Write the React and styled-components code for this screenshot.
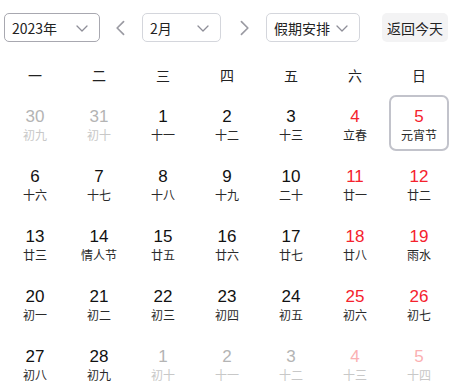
import styled, { createGlobalStyle } from "styled-components";

const GlobalStyle = createGlobalStyle`
  body {
    margin: 0;
    background: #ffffff;
    font-family: "Liberation Sans", "Noto Sans CJK SC", sans-serif;
  }
`;

const Wrapper = styled.div`
  width: 453px;
  padding: 13px 0 0 3px;
  box-sizing: border-box;
`;

const Toolbar = styled.div`
  display: flex;
  align-items: center;
  height: 29px;
  padding-left: 1px;
`;

const Select = styled.div`
  display: flex;
  align-items: center;
  justify-content: space-between;
  box-sizing: border-box;
  width: ${(p) => p.width}px;
  height: 29px;
  padding: 0 10px 0 7px;
  border: 1px solid ${(p) => (p.active ? "#a8a8b0" : "#d4d6dc")};
  border-radius: 5px;
  font-family: "Noto Sans CJK SC", sans-serif;
  font-size: 14px;
  color: #222;
`;

const NavArrow = styled.button`
  display: flex;
  align-items: center;
  justify-content: center;
  width: ${(p) => p.width}px;
  height: 29px;
  padding: 0;
  border: none;
  background: none;
  color: #9a9aa2;
`;

const TodayButton = styled.button`
  margin-left: 22px;
  width: 66px;
  height: 29px;
  border: none;
  border-radius: 5px;
  background: #f3f3f4;
  font-family: "Noto Sans CJK SC", sans-serif;
  font-size: 14px;
  color: #222;
  padding: 0;
`;

const Grid = styled.div`
  display: grid;
  grid-template-columns: repeat(7, 64px);
  margin-top: 18px;
`;

const WeekDay = styled.div`
  height: 33px;
  padding-bottom: 3px;
  box-sizing: border-box;
  display: flex;
  align-items: center;
  justify-content: center;
  font-family: "Noto Sans CJK SC", sans-serif;
  font-size: 14px;
  color: #222;
`;

const Cell = styled.div`
  justify-self: center;
  box-sizing: border-box;
  width: 60px;
  height: 56px;
  margin: 2px 0;
  display: flex;
  flex-direction: column;
  align-items: center;
  justify-content: center;
  border: 2px solid ${(p) => (p.selected ? "#c2c3cb" : "transparent")};
  border-radius: 7px;
  padding-top: 3px;
`;

const dayColor = (p) => {
  if (p.red) return p.faded ? "#fbb0b2" : "#f5222d";
  return p.faded ? "#b4b4b4" : "#111";
};

const lunarColor = (p) => {
  if (p.faded) return "#c8c8c8";
  return "#2a2a2a";
};

const DayNum = styled.div`
  font-size: 17px;
  line-height: 19px;
  color: ${dayColor};
`;

const Lunar = styled.div`
  font-family: "Noto Sans CJK SC", sans-serif;
  font-size: 12px;
  line-height: 16px;
  margin-top: 1px;
  color: ${lunarColor};
`;

const Chevron = ({ dir, size = 14 }) => {
  const paths = {
    down: "M2 5 L7 10 L12 5",
    left: "M9 2 L4 7 L9 12",
    right: "M5 2 L10 7 L5 12",
  };
  return (
    <svg width={size} height={size} viewBox="0 0 14 14" fill="none">
      <path d={paths[dir]} stroke="currentColor" strokeWidth="1.3" strokeLinecap="round" strokeLinejoin="round" />
    </svg>
  );
};

const DownIcon = styled.span`
  display: flex;
  color: #8e8e98;
`;

const weekDays = ["一", "二", "三", "四", "五", "六", "日"];

const days = [
  ["30", "初九", true], ["31", "初十", true], ["1", "十一"], ["2", "十二"], ["3", "十三"], ["4", "立春"], ["5", "元宵节"],
  ["6", "十六"], ["7", "十七"], ["8", "十八"], ["9", "十九"], ["10", "二十"], ["11", "廿一"], ["12", "廿二"],
  ["13", "廿三"], ["14", "情人节"], ["15", "廿五"], ["16", "廿六"], ["17", "廿七"], ["18", "廿八"], ["19", "雨水"],
  ["20", "初一"], ["21", "初二"], ["22", "初三"], ["23", "初四"], ["24", "初五"], ["25", "初六"], ["26", "初七"],
  ["27", "初八"], ["28", "初九"], ["1", "初十", true], ["2", "十一", true], ["3", "十二", true], ["4", "十三", true], ["5", "十四", true],
];

export default function App() {
  return (
    <Wrapper>
      <GlobalStyle />
      <Toolbar>
        <Select width={96} active>
          <span>2023年</span>
          <DownIcon><Chevron dir="down" /></DownIcon>
        </Select>
        <NavArrow width={42}><Chevron dir="left" size={18} /></NavArrow>
        <Select width={79}>
          <span>2月</span>
          <DownIcon><Chevron dir="down" /></DownIcon>
        </Select>
        <NavArrow width={45}><Chevron dir="right" size={18} /></NavArrow>
        <Select width={94}>
          <span>假期安排</span>
          <DownIcon><Chevron dir="down" /></DownIcon>
        </Select>
        <TodayButton>返回今天</TodayButton>
      </Toolbar>
      <Grid>
        {weekDays.map((w) => (
          <WeekDay key={w}>{w}</WeekDay>
        ))}
        {days.map(([n, l, faded], i) => {
          const red = i % 7 >= 5;
          return (
            <Cell key={i} selected={i === 6}>
              <DayNum red={red} faded={faded}>{n}</DayNum>
              <Lunar faded={faded}>{l}</Lunar>
            </Cell>
          );
        })}
      </Grid>
    </Wrapper>
  );
}
